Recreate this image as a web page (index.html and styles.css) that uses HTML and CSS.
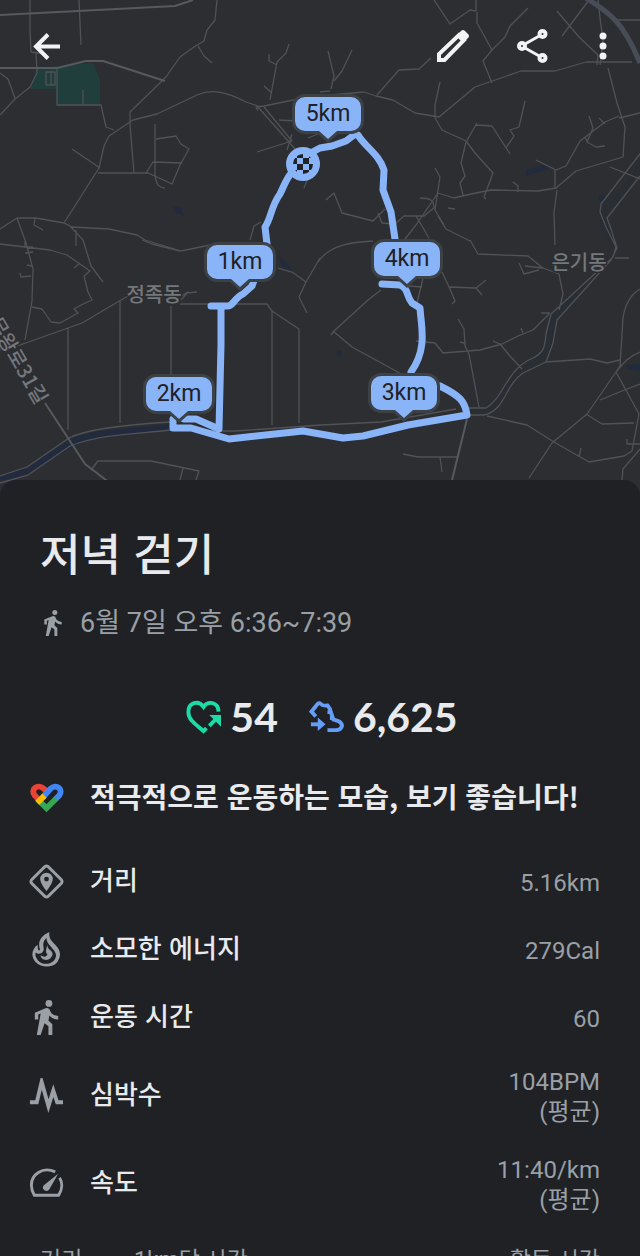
FILE: index.html
```
<!DOCTYPE html>
<html lang="ko">
<head>
<meta charset="utf-8">
<meta name="viewport" content="width=device-width, initial-scale=1">
<title>저녁 걷기</title>
<link rel="stylesheet" href="styles.css">
</head>
<body>
<div class="screen">
  <header class="hero">
    <svg class="map" viewBox="0 0 640 496" role="img" aria-label="걷기 경로 지도">
      <defs>
        <g id="pin">
          <path d="M-23-33h46a10 10 0 0 1 10 10v14a10 10 0 0 1-10 10h-14l-9 8-9-8h-14a10 10 0 0 1-10-10v-14a10 10 0 0 1 10-10z"/>
        </g>
        <clipPath id="flag"><circle cx="303" cy="164" r="10"/></clipPath>
      </defs>
      <rect class="land" width="640" height="496"/>

      <path class="park" d="M37 68L93 63 100 80V106H56V89H30z"/>
      <g class="water">
        <path d="M172 206l9 1 3 9-8-3zM278 256l7 5 8 11-10-3zM526 170l18-5 4 4-22 7zM599 195l7 2-1 6-6-3zM626 365l14-1v7l-12-2zM337 350l5 1-1 6-4-1z"/>
        <path d="M0 475L26 469C45 455 62 444 75 437L100 431 170 424V430L98 438C75 443 60 454 28 474L0 481z"/>
        <path class="stream" d="M467 411L486 408C503 402 507 371 534 361 547 350 547 330 551 313L602 269 614 252 608 240 599 224 604 211 640 164V170L607 217 613 238 614 256 557 320 548 358 520 371C509 386 502 412 485 414L467 415z"/>
      </g>

      <g class="roads">
        <path d="M30 0V30l1 22 14 2M79 0l2 45M36 53l1 20-7 14-15 12L0 115M0 73l8 6 7 19M57 68v37h44l5 22 8 3M83 90v15M46 72h9v13h-9zM51 72v13"/>
        <path d="M217 0l-2 20-8 10-3 11-10 6-14 10-14 20L130 112v13l4 48M198 46l6 10 8 7"/>
        <path d="M261 107L246 102C225 91 211 89 197 95L157 114l-24 6-24 16-5 10-5 22-35 55-28-5H17L0 229M72 149l28 19M98 173h50l11 5 13 6 8-19 9-16-8-5-5-8-20 3M155 124v52c1 8 4 12 10 12M146 173l7-11 29 1M64 223l8 4 37 2 28 6 8 5 36 11 29-6M35 218l-1 7 9 5M17 218l9 25 7 26-1 32-7 39M70 226l13 14 8 26 12 16M76 230v16M0 244l50 6 17 5 23 16-6 5 4 16 4 8-9 4-9 5 4 4-18 10-9-1-9-13-10-2M33 247h-8v-7M25 253l8-1M20 273l1 4 10-1M27 265l5 1M74 268l6-5"/>
        <path d="M0 350l23-6 45-16 14-5 22-13 24-14M68 328v102M120 301v122M171 306v80M180 304h87l5 7v114M272 311l27 18v94M181 300l7-8-8 5M187 293l10-1M0 476l27-9 42-29c20-10 67-14 101-16M0 483l28-8 42-29c35-13 70-12 101-16 25 0 40 1 65 1l85-6 60-3 75-13"/>
        <path d="M289 44l-3 9-9 9-7 38M269 54v7l8 4M264 86l8 7M258 111l-2-4 8-1 44-9 56-5 12 4 17 4 22 13 24 4 36-30 26-9 20-7h34l31-9h46M320 92l10-1M328 51l6 25-3 13M352 50l-10 21-8 10M377 95l22-25 20-1 12-11"/>
        <path d="M434 0l16 24 20-14 6 1V0M477 12v11l15 27-9 11 9 22M492 50l13-13 5-11 18-18M557 11l22 26 19 18-1 10M562 36l27-36M598 0l2 18 3 22-3 25M608 68l9 35 8 24-2 30-47 14-20 17-18 3-47-1-20 4-17 4-16-5-22 32-14 18M619 118l21-5M617 20h23M440 82l-5 23v13l7 12 24 11 9 12 18 20-9 24 2 2M477 123l-11 19-5 21 4 13-5 7 3 12M476 125l16 1 18 28M506 148l8-12-4-6 9-3 6-26"/>
        <path d="M536 160l20 10 10-4 14-25 25-19 14-6M555 189v-19M589 116l4 12-6 14 9 5 9-1M599 118l6 6M588 143l-3-6M513 182l5 4v6M557 190l-3 22 1 33M610 167l30 12M435 168l5 9-5 33 9 15M420 198c10 0 14 2 14 10l-10 8-20 0-9 8-13-1-4-10M416 216l13 22M448 208l7 1M438 216l8 13 24 12M326 200l8-7 8 20 31 8 12-12M258 107l38 43M264 107l28 34-35 11M279 120l17 1M292 134l-5 16M261 222l-7 4-4 14M142 240l10 4 28 7M308 138l10-4M304 188l4-10"/>
        <path d="M318 262c12-18 36-20 55-21M278 268l14 4 14 10-7 15 8 16M306 282l14-24M381 290l-13 10-34 31-3 4M333 331l19 16 33 18 18 10M423 278l-6 25M409 286l13 1M442 272l8 17 5 12-3 3M450 287l26 1 10-8M476 288l6 7M458 319l6 10 1 17 4 8 10 53M460 342l4 1M470 240l8 14 50 2 15 12-18-2M519 263l5 11 15-4M543 268l16 6 4 20-4 16M541 313l9 0M549 314l-16 16-15 6-16 8-22 6-37 3-8-10-19-2M493 341l9 4M521 328l2 5M501 345l8 10 13 14M467 408l19 0c18-10 20-39 47-50 10-5 12-10 13-24l5-20 62-57 3-10-10-20-6-15 1-8 42-54M467 415h17c22-5 20-29 39-42l23-11 44-3 17 4 13-3M546 362l7-19 4-23 54-60 6-12-6-19-4-11 33-42M615 258h14"/>
        <path d="M640 289c-10 6-15 15-17 29l-3 48-17 25-16 23-35 29-23 35M640 352c-13 5-18 13-24 20l23 42-7 37-8 5-35 6-35-20-27-17-40-9M640 384l-18 7-22 9M586 414l16 10 32-1M579 457l2-9M627 439v5h13M640 449l-17 20-1 11M403 454l15 3h39M440 457l2 15M91 470l7-9h53l48 10-6 18M183 468l-5 20"/>
      </g>
      <g class="roads roads-wide">
        <path d="M0 15L175 6l18-6M0 68h57l29-7h17l62 20M45 403l40 61 21 16 5 3M467 419L452 480"/>
        <path class="highway" d="M586-2c25 15 38 26 54 65"/>
      </g>
      <g class="places">
        <text x="154" y="302">정족동</text>
        <text x="579" y="270">은기동</text>
        <text transform="translate(12 364) rotate(60)">무왕로31길</text>
      </g>

      <g id="track" class="casing">
        <path d="M303 163C288 172 285 184 280 194 271 206 271 219 265 227L267 244 252 286 243 294C235 297 233 307 227 306H211M221 306V345L219 429 196 419H184M173 419V428H191L229 439 303 431 343 438 363 436 408 425 467 415C465 401 460 396 440 386M411 372C428 348 421 326 420 308L412 303C406 296 409 289 400 285L382 284"/>
        <path d="M303 157L320 148 332 146 346 141 354 135H358C365 147 379 154 384 170L383 190 391 212 395 239"/>
      </g>
      <use href="#track" class="route"/>
      <circle class="finish" cx="303" cy="164" r="17"/>
      <path class="checks" clip-path="url(#flag)" d="M303 158h6v6h-6zM297 164h6v6h-6zM309 164h6v6h-6zM291 158h6v6h-6zM297 152h6v6h-6zM303 170h6v6h-6zM309 152h6v6h-6zM291 170h6v6h-6z"/>

      <g class="pins">
        <g transform="translate(328 130)"><use href="#pin"/><text y="-9">5km</text></g>
        <g transform="translate(240 278)"><use href="#pin"/><text y="-9">1km</text></g>
        <g transform="translate(407 275)"><use href="#pin"/><text y="-9">4km</text></g>
        <g transform="translate(179 410)"><use href="#pin"/><text y="-9">2km</text></g>
        <g transform="translate(404 409)"><use href="#pin"/><text y="-9">3km</text></g>
      </g>
    </svg>
    <nav class="toolbar" aria-label="활동">
      <button class="tool back" type="button" aria-label="뒤로"><svg viewBox="0 0 36 36"><path class="line" d="M32 18.500H8M20 6.500L8 18.500 20 30.500"/></svg></button>
      <button class="tool" type="button" aria-label="수정"><svg viewBox="0 0 36 36"><path class="line" d="M4 32v-6L24 7l5 5L9.500 32z"/><path class="fill" d="M21 8l5-5q2-2 4 0l3 3q2 2 0 4l-5 5z"/></svg></button>
      <button class="tool" type="button" aria-label="공유"><svg viewBox="0 0 36 36"><path class="line thin" d="M10 16L26 7M10 20l16 9"/><g class="line"><circle cx="7" cy="18" r="3"/><circle cx="27.500" cy="6" r="3"/><circle cx="27.500" cy="30" r="3"/></g></svg></button>
      <button class="tool more" type="button" aria-label="더보기"><svg viewBox="0 0 36 36"><g class="fill"><circle cx="18" cy="8" r="3.500"/><circle cx="18" cy="18" r="3.500"/><circle cx="18" cy="28" r="3.500"/></g></svg></button>
    </nav>
  </header>

  <main class="sheet">
    <h1 class="title">저녁 걷기</h1>
    <p class="when">
      <svg class="walker" viewBox="0 0 36 36"><use href="#walk"/></svg>
      <span>6월 7일 오후 6:36~7:39</span>
    </p>

    <div class="scores">
      <span class="score">
        <svg class="score-icon heart" viewBox="0 0 36 36"><path d="M33.500 12C33 1 22 1 18 7 13 0 2 2 2.500 13c0 8 9 13 15.500 19l3-3M24 26.500L31 19.500"/><path class="tip" d="M24 15.500h12v12z"/></svg>
        <span>54</span>
      </span>
      <span class="score">
        <svg class="score-icon shoe" viewBox="0 0 36 36"><path d="M7 17L2.500 12 9 4q1.500-1.500 3 0 2 2.500 7 1.500 3 3 4 8.500l2 6 6 2q4 3 2.500 6-1.500 3-5.500 3H19M23 12.500h-4M25.500 18.500h-4"/><path d="M2 25h9"/><path class="tip" d="M9 18l8 7-8 7z"/></svg>
        <span>6,625</span>
      </span>
    </div>

    <p class="praise">
      <svg class="icon" viewBox="0 0 36 36"><g fill="none" stroke-width="6"><path stroke="#ea4335" d="M10 19L6 15C1 9 8 3 14 7l5 4"/><path stroke="#4285f4" d="M14 17l8-9c6-6 14 1 9 7l-4 4"/><path stroke="#34a853" d="M9 19l9 9 10-10"/><path stroke="#fbbc04" d="M8.500 22.500L16 15"/></g></svg>
      <strong>적극적으로 운동하는 모습, 보기 좋습니다!</strong>
    </p>

    <dl class="stats">
      <div class="stat">
        <svg class="icon" viewBox="0 0 36 36"><path class="line" d="M16.500 2.500q1.500-1 3 0l14 14q1 1.500 0 3l-14 14q-1.500 1-3 0l-14-14q-1-1.500 0-3z"/><path class="fill" fill-rule="evenodd" d="M18 9a6.500 6.500 0 0 0-6.500 6.500C11.500 20 18 28 18 28s6.500-8 6.500-12.500A6.500 6.500 0 0 0 18 9zm0 4a2.500 2.500 0 1 1 0 5 2.500 2.500 0 0 1 0-5z"/></svg>
        <dt>거리</dt><dd>5.16km</dd>
      </div>
      <div class="stat">
        <svg class="icon" viewBox="0 0 36 36"><path class="fill" fill-rule="evenodd" d="M21 0C12 4 9 10 11 17c1 3-2 3-2-1v-3C2 18 2 26 7 31c6 6 17 6 22 0 5-7 3-13-2-18-4-4-7-7-6-13zM18 6c0 5 3 7 6 11 4 4 5 8 2 12-4 5-13 5-17 0-2-3-3-5-2-8 3 3 9 1 8-5-1-4 0-7 3-10z"/><path class="fill" d="M19 13c-2 6-2 8 0 10-1 3-4 3-7 1 0 5 7 6 10 3 4-4 2-7-1-9-2-2-2-3-2-5z"/></svg>
        <dt>소모한 에너지</dt><dd>279Cal</dd>
      </div>
      <div class="stat">
        <svg class="icon" viewBox="0 0 36 36"><g id="walk"><circle class="fill" cx="20.500" cy="3.500" r="3.500"/><path class="fill" d="M17 8.500q2-1 4 1l2 4q3 3 7 3v3.500q-6 0-9-4l-1 5 4 4v11h-4v-9l-4-3-4 12H8l4-22-2.500 1V20H6v-7z"/></g></svg>
        <dt>운동 시간</dt><dd>60</dd>
      </div>
      <div class="stat">
        <svg class="icon" viewBox="0 0 36 36"><path class="line pulse" d="M1 25h7L13 4l7 25 5-16 4 12h6"/></svg>
        <dt>심박수</dt><dd>104BPM<br>(평균)</dd>
      </div>
      <div class="stat">
        <svg class="icon" viewBox="0 0 36 36"><path class="line" d="M27 6C14 0 2 9 2.500 20q0 5 3 10h25c4-6 4-13 1-18"/><path class="fill" d="M30 8L15 20q-2 3 1 5 3 2 5-1z"/></svg>
        <dt>속도</dt><dd>11:40/km<br>(평균)</dd>
      </div>
    </dl>

    <table class="splits">
      <thead><tr><th scope="col">거리</th><th scope="col">1km당 시간</th><th scope="col">활동 시간</th></tr></thead>
    </table>
  </main>
</div>
</body>
</html>
```
FILE: styles.css
```
* { box-sizing: border-box; }

body {
  margin: 0;
  background: #202125;
  color: #e8eaed;
  font-family: Roboto, "Noto Sans CJK KR", sans-serif;
}

.screen { height: 100vh; overflow: hidden; }

.hero { position: relative; }
.map { display: block; width: 100%; height: auto; }
.land { fill: #2d2e32; }
.park { fill: #203e3b; }
.water { fill: #212b3d; }
.stream { fill: #292d34; }
.roads { fill: none; stroke: #505256; stroke-width: 1.3; stroke-linejoin: round; }
.roads-wide { stroke: #56595e; stroke-width: 2; }
.highway { stroke: #474c56; stroke-width: 5; }
.places {
  fill: #74777c;
  font: 500 20px "Noto Sans CJK KR", sans-serif;
  text-anchor: middle;
  paint-order: stroke;
  stroke: #2d2e32;
  stroke-width: 3;
}
.casing { fill: none; stroke-linejoin: round; stroke-linecap: round; }
.route { stroke: #8ab4f8; stroke-width: 7; }
.finish { fill: #8ab4f8; }
.checks { fill: #202125; }
.pins { fill: #8ab4f8; stroke: #3c4146; stroke-width: 6; paint-order: stroke; }
.pins text {
  fill: #202125;
  stroke: none;
  font-size: 23px;
  text-anchor: middle;
}

.toolbar {
  position: absolute;
  inset: 0 0 auto;
  display: flex;
  align-items: center;
  padding: 28px 19px 0 28px;
}
.tool {
  width: 36px;
  height: 36px;
  margin: 0 0 0 44px;
  padding: 0;
  border: 0;
  background: none;
  color: #f1f3f4;
}
.tool svg { display: block; width: 100%; height: 100%; }
.back { margin: 0 auto 0 0; }
.more { margin-left: 34px; }

.line { fill: none; stroke: currentColor; stroke-width: 3; }
.fill { fill: currentColor; }
.tool .line { stroke-width: 4; }
.tool .thin { stroke-width: 3; }

.sheet {
  position: relative;
  margin-top: -16px;
  border-radius: 16px 16px 0 0;
  background: #202125;
}

.title {
  margin: 0;
  padding: 40px 40px 0;
  font: 500 44px/64px "Noto Sans CJK KR", sans-serif;
}

.when {
  display: flex;
  align-items: center;
  gap: 14px;
  margin: 19px 40px 0;
  color: #9aa0a6;
  font-size: 27px;
  line-height: 40px;
}
.walker { width: 26px; height: 26px; }

.scores {
  display: flex;
  justify-content: center;
  gap: 31px;
  margin-top: 48px;
  padding-left: 4px;
  font: 700 41px/52px Lato, sans-serif;
}
.score { display: flex; align-items: center; gap: 9px; }
.score-icon { width: 35px; height: 35px; fill: none; stroke-width: 4; }
.heart { stroke: #1ddba6; }
.shoe { stroke: #669df6; }
.heart .tip { fill: #1ddba6; stroke: none; }
.shoe .tip { fill: #669df6; stroke: none; }

.praise, .stat {
  display: flex;
  align-items: center;
  gap: 26px;
  margin: 0;
  padding: 0 40px 0 29px;
}
.praise { padding-right: 29px; margin-top: 31px; font: 28px/44px "Noto Sans CJK KR", sans-serif; }
.praise strong { padding-bottom: 4px; font-weight: 700; }
.icon { flex: none; width: 35px; height: 35px; color: #9aa0a6; }

.stats { margin: 25px 0 0; }
.stat { min-height: 68px; padding-top: 12px; padding-bottom: 12px; }
.stat dt { flex: 1; padding-bottom: 4px; font: 500 26px/30px "Noto Sans CJK KR", sans-serif; }
.stat dd { margin: 0; padding-top: 4px; color: #9aa0a6; font-size: 24px; line-height: 30px; text-align: right; }
.stat .pulse { stroke-width: 4; }

.splits {
  width: 100%;
  padding: 0 40px;
  border-spacing: 0;
  color: #9aa0a6;
  font-size: 23px;
  line-height: 32px;
}
.splits th { padding: 18px 0; font-weight: 400; text-align: left; }
.splits th:first-child { width: 94px; }
.splits th:last-child { text-align: right; }
```
